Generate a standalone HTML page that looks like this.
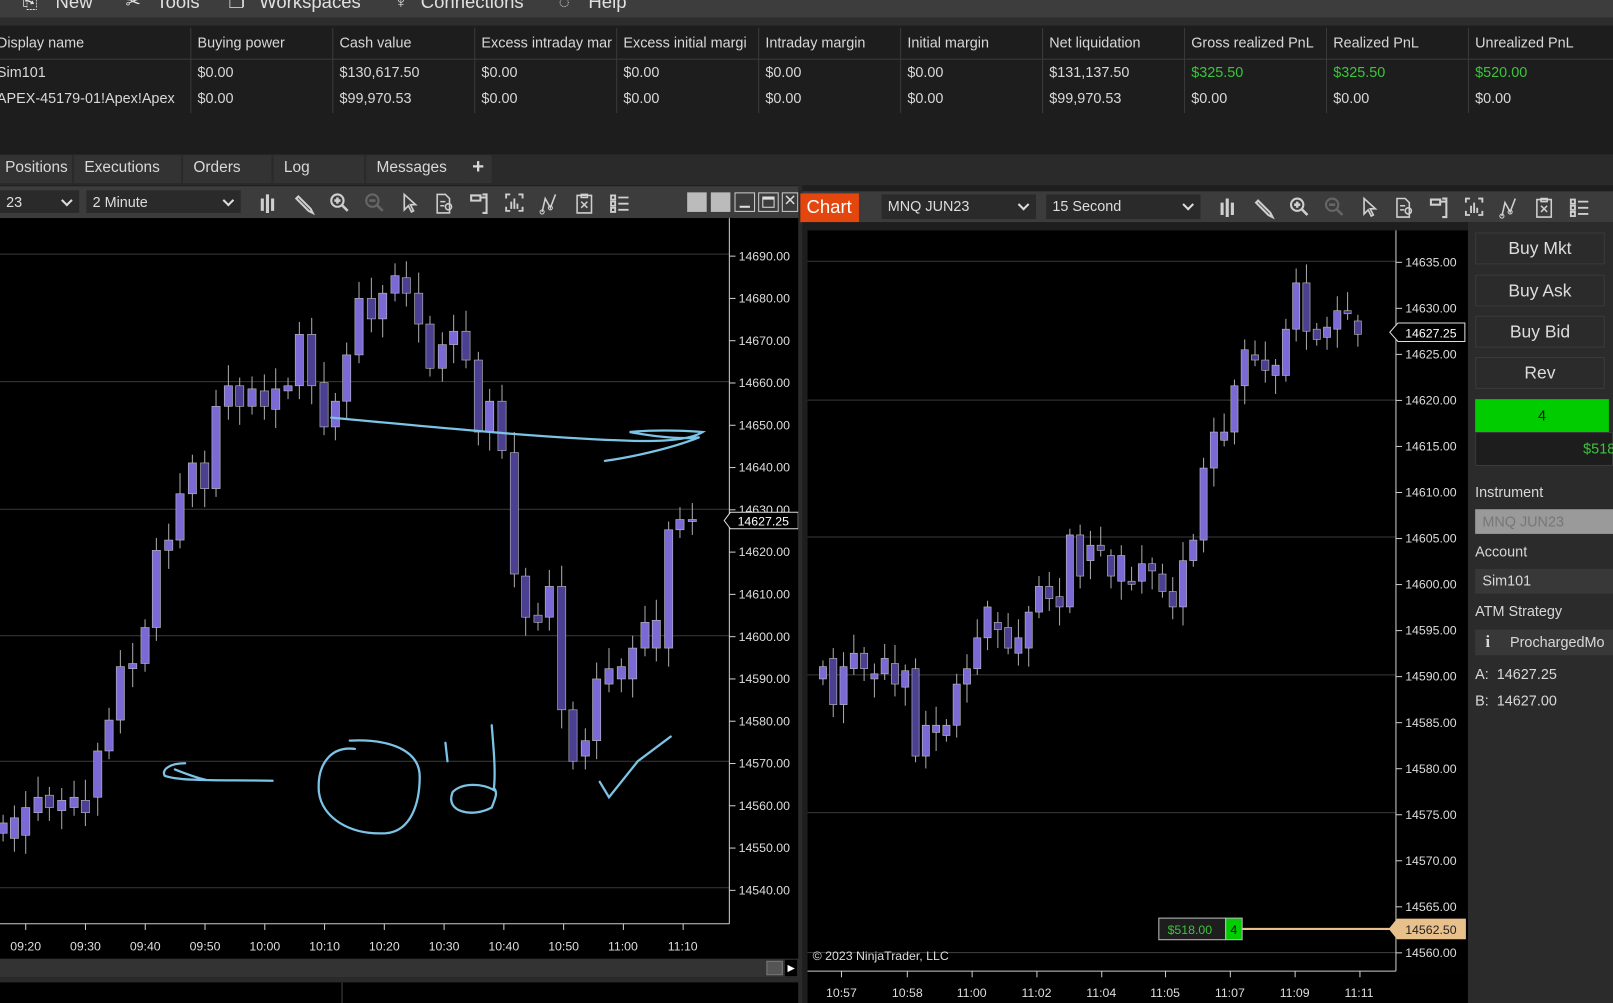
<!DOCTYPE html>
<html><head><meta charset="utf-8">
<style>
*{margin:0;padding:0;box-sizing:border-box}
html,body{width:1613px;height:1003px;overflow:hidden;background:#1e1e1e;font-family:"Liberation Sans",sans-serif;color:#d8d8d8}
#w{position:absolute;left:0;top:0;width:1568px;height:975px;transform:scale(1.02870);transform-origin:0 0;background:#1e1e1e}
.a{position:absolute}
.t{position:absolute;white-space:nowrap;font-size:14px}
.m{position:absolute;top:-8px;font-size:18px;color:#e0e0e0;white-space:nowrap}
.tb{background:#3c3c3c}
.dd{position:absolute;background:#2a2a2a;height:22px;font-size:14px;padding:3px 6px;color:#ddd}
.dd:after{content:"";position:absolute;right:8px;top:6px;width:6px;height:6px;border-right:2px solid #ddd;border-bottom:2px solid #ddd;transform:rotate(45deg)}
.btn{position:absolute;left:1434px;width:126px;height:31px;background:#2b2b2b;border:1px solid #3a3a3a;font-size:17px;text-align:center;line-height:29px;color:#ddd}
</style></head><body><div id="w">
<div class="a" style="left:0;top:0;width:1568px;height:17px;background:#3d3d3d"></div>
<div class="a" style="left:0;top:17px;width:1568px;height:8px;background:#2d2d2d"></div>
<div class="m" style="left:22px">⎘</div><div class="m" style="left:54px">New</div>
<div class="m" style="left:122px">✂</div><div class="m" style="left:152px">Tools</div>
<div class="m" style="left:222px">❐</div><div class="m" style="left:252px">Workspaces</div>
<div class="m" style="left:383px">♆</div><div class="m" style="left:409px">Connections</div>
<div class="m" style="left:543px">◌</div><div class="m" style="left:572px">Help</div>
<div class="a" style="left:0;top:25px;width:1568px;height:125px;background:#1d1d1d"></div>
<div class="a" style="left:0;top:57px;width:1568px;height:1px;background:#3c3c3c"></div>
<div id="grid"></div>
<div class="a" style="left:0;top:150px;width:1568px;height:30px;background:#2a2a2a"></div>
<div id="tabs"></div>
<div class="a tb" style="left:0;top:181px;width:778px;height:31px"></div>
<div class="dd" style="left:0;top:185px;width:77px">23</div>
<div class="dd" style="left:84px;top:185px;width:150px">2 Minute</div>
<div class="a" style="left:668px;top:187px;width:19px;height:19px;background:#bbb"></div>
<div class="a" style="left:691px;top:187px;width:19px;height:19px;background:#bbb"></div>
<div class="a" style="left:714px;top:187px;width:20px;height:19px;border:1px solid #ccc"><div class="a" style="left:4px;top:12px;width:10px;height:2px;background:#ddd"></div></div>
<div class="a" style="left:737px;top:187px;width:20px;height:19px;border:1px solid #ccc"><div class="a" style="left:3px;top:3px;width:12px;height:11px;border:1px solid #ddd;border-top-width:3px"></div></div>
<div class="a" style="left:760px;top:187px;width:16px;height:19px;border:1px solid #ccc;color:#ddd;font-size:15px;line-height:16px;text-align:center">✕</div>
<div class="a" style="left:0;top:212px;width:776px;height:720px;background:#000"></div>
<svg id="lc" class="a" style="left:0;top:0" width="776" height="975"></svg>
<div class="a" style="left:0;top:932px;width:776px;height:18px;background:#333"></div>
<div class="a" style="left:745px;top:934px;width:16px;height:14px;background:#555;border:1px solid #777"></div>
<div class="a" style="left:763px;top:933px;width:12px;height:16px;background:#000;color:#fff;font-size:9px;text-align:center;line-height:16px">▶</div>
<div class="a" style="left:0;top:950px;width:776px;height:5px;background:#2a2a2a"></div>
<div class="a" style="left:0;top:955px;width:776px;height:20px;background:#000"></div>
<div class="a" style="left:332px;top:955px;width:1px;height:20px;background:#444"></div>
<div class="a" style="left:776px;top:180px;width:4px;height:795px;background:#2a2a2a"></div>
<div class="a tb" style="left:780px;top:186px;width:788px;height:30px"></div>
<div class="a" style="left:778px;top:188px;width:57px;height:28px;background:#e3470d;color:#fff;font-size:18px;padding:3px 6px">Chart</div>
<div class="dd" style="left:857px;top:189px;width:150px;height:24px">MNQ JUN23</div>
<div class="dd" style="left:1017px;top:189px;width:150px;height:24px">15 Second</div>
<div class="a" style="left:780px;top:216px;width:650px;height:759px;background:#1e1e1e"></div>
<div class="a" style="left:785px;top:224px;width:642px;height:720px;background:#000"></div>
<div class="a" style="left:785px;top:944px;width:642px;height:31px;background:#000"></div>
<svg id="rc" class="a" style="left:0;top:0" width="1568" height="975"></svg>
<div class="a" style="left:1427px;top:216px;width:141px;height:759px;background:#2b2b2b"></div>
<div class="btn" style="top:226px">Buy Mkt</div>
<div class="btn" style="top:267px">Buy Ask</div>
<div class="btn" style="top:307px">Buy Bid</div>
<div class="btn" style="top:347px">Rev</div>
<div class="a" style="left:1434px;top:388px;width:130px;height:32px;background:#00cc00;color:#111;text-align:center;line-height:32px;font-size:14px">4</div>
<div class="a" style="left:1434px;top:420px;width:134px;height:33px;background:#1d1d1d;border:1px solid #3a3a3a"></div>
<div class="t" style="left:1539px;top:428px;color:#3bc43b">$518</div>
<div class="t" style="left:1434px;top:470px">Instrument</div>
<div class="a" style="left:1434px;top:495px;width:134px;height:24px;background:#9a9a9a;color:#777;font-size:14px;padding:4px 7px">MNQ JUN23</div>
<div class="t" style="left:1434px;top:528px">Account</div>
<div class="a" style="left:1434px;top:553px;width:134px;height:24px;background:#383838;font-size:14px;padding:3px 7px">Sim101</div>
<div class="t" style="left:1434px;top:586px">ATM Strategy</div>
<div class="a" style="left:1434px;top:612px;width:134px;height:25px;background:#383838;font-size:14px;padding:4px 10px"><b style="font-family:'Liberation Serif';font-size:16px">i</b>&nbsp;&nbsp;&nbsp;&nbsp;&nbsp;ProchargedMo</div>
<div class="t" style="left:1434px;top:647px">A:&nbsp; 14627.25</div>
<div class="t" style="left:1434px;top:673px">B:&nbsp; 14627.00</div>
</div>
<script>
var H='';
var cols=[0,185,323,461,599,737,875,1013,1151,1289,1427,1565];
var hd=['Display name','Buying power','Cash value','Excess intraday mar','Excess initial margi','Intraday margin','Initial margin','Net liquidation','Gross realized PnL','Realized PnL','Unrealized PnL'];
var r1=['Sim101','$0.00','$130,617.50','$0.00','$0.00','$0.00','$0.00','$131,137.50','$325.50','$325.50','$520.00'];
var r2=['APEX-45179-01!Apex!Apex','$0.00','$99,970.53','$0.00','$0.00','$0.00','$0.00','$99,970.53','$0.00','$0.00','$0.00'];
for(var i=0;i<11;i++){var x=cols[i]+(i?7:-3);
H+='<div class="t" style="left:'+x+'px;top:33px;width:'+(cols[i+1]-cols[i]-8)+'px;overflow:hidden">'+hd[i]+'</div>';
var g=i>=8?'color:#3bc43b':'';
H+='<div class="t" style="left:'+x+'px;top:62px;'+g+'">'+r1[i]+'</div>';
H+='<div class="t" style="left:'+x+'px;top:87px">'+r2[i]+'</div>';
if(i)H+='<div class="a" style="left:'+cols[i]+'px;top:27px;width:1px;height:83px;background:#3a3a3a"></div>';}
document.getElementById('grid').innerHTML=H;
var tb=[['Positions',-5,70],['Executions',72,176],['Orders',178,264],['Log',266,354],['Messages',356,452],['+',452,478]];
H='';tb.forEach(function(t){H+='<div class="a" style="left:'+t[1]+'px;top:151px;width:'+(t[2]-t[1])+'px;height:27px;background:#333;font-size:15px;padding:3px 10px;'+(t[0]=='+'?'font-size:20px;padding:0 7px;font-weight:bold':'')+'">'+t[0]+'</div>'});
document.getElementById('tabs').innerHTML=H;
function icons(x0,y,step){var s='',c='#cfcfcf';
var p=[
'<path d="M3 6v12M8 2v18M13 6v12" stroke="'+c+'" stroke-width="3"/>',
'<path d="M4 4l12 12l2 4l-4-2L2 6z" fill="none" stroke="'+c+'" stroke-width="2"/>',
'<circle cx="8" cy="8" r="6" fill="none" stroke="'+c+'" stroke-width="2"/><path d="M5 8h6M8 5v6M12 12l6 6" stroke="'+c+'" stroke-width="2.5"/>',
'<circle cx="8" cy="8" r="6" fill="none" stroke="#666" stroke-width="2"/><path d="M5 8h6M12 12l6 6" stroke="#666" stroke-width="2.5"/>',
'<path d="M5 2v15l4-4l3 6l2-1l-3-6h5z" fill="none" stroke="'+c+'" stroke-width="1.6"/>',
'<path d="M3 2h8l4 4v14H3z M6 9h5M6 13h4" fill="none" stroke="'+c+'" stroke-width="1.5"/><circle cx="14" cy="14" r="3" fill="none" stroke="'+c+'" stroke-width="1.5"/>',
'<path d="M2 3h9v5H2zM11 5h5M13 2h4v18h-4" fill="none" stroke="'+c+'" stroke-width="2"/>',
'<path d="M2 6V2h4M14 2h4v4M2 14v4h4M18 14v4h-4M7 16V9M10 16V6M13 16v-5" fill="none" stroke="'+c+'" stroke-width="1.8"/>',
'<path d="M3 19L6 6l5 9l5-13" fill="none" stroke="'+c+'" stroke-width="1.5"/><circle cx="3" cy="19" r="2" fill="none" stroke="'+c+'"/><circle cx="11" cy="15" r="2" fill="none" stroke="'+c+'"/>',
'<path d="M3 3h14v17H3zM7 2h6v3H7zM7 9l6 6M13 9l-6 6" fill="none" stroke="'+c+'" stroke-width="1.5"/>',
'<path d="M2 3h4v4H2zM2 9h4v4H2zM2 15h4v4H2zM9 5h10M9 11h10M9 17h10" fill="none" stroke="'+c+'" stroke-width="1.8"/>'];
p.forEach(function(q,i){s+='<g transform="translate('+(x0+i*step)+','+y+')">'+q+'</g>'});return s;}
var L='';
function ly(p){return 249+(14690-p)*4.11}
for(var p=14690;p>=14540;p-=10){var y=ly(p);L+='<line x1="709" x2="715" y1="'+y+'" y2="'+y+'" stroke="#ccc"/><text x="718" y="'+(y+4)+'" fill="#ddd" font-size="12" font-family="Liberation Sans">'+p+'.00</text>';}
[247,371,495,618,740,863].forEach(function(y){L+='<line x1="0" x2="709" y1="'+y+'" y2="'+y+'" stroke="#3a3a3a"/>'});
L+='<line x1="709" x2="709" y1="212" y2="898" stroke="#ccc"/><line x1="0" x2="709" y1="898" y2="898" stroke="#ccc"/>';
var tl=['09:20','09:30','09:40','09:50','10:00','10:10','10:20','10:30','10:40','10:50','11:00','11:10'];
tl.forEach(function(t,i){var x=25+i*58.1;L+='<line x1="'+x+'" x2="'+x+'" y1="898" y2="904" stroke="#ccc"/><text x="'+(x-15)+'" y="924" fill="#ddd" font-size="12" font-family="Liberation Sans">'+t+'</text>'});
var lc=[[3,810,800],[14,815,795],[25,812,785],[37,790,775],[48,773,785],[60,788,778],[72,785,775],[83,778,790],[95,775,730],[106,730,700],[117,700,648],[129,650,645],[141,645,610],[152,610,535],[164,535,525],[175,525,480],[187,480,450],[199,450,475],[210,475,395],[222,395,375],[233,375,395],[245,395,378],[257,380,395],[268,398,378],[280,380,375],[291,375,325],[303,325,375],[315,372,415],[326,415,390],[337,390,345],[349,345,290],[361,290,310],[372,310,285],[384,285,268],[395,270,285],[407,285,315],[418,315,358],[430,358,335],[441,335,322],[453,322,350],[465,350,420],[476,420,390],[488,390,438],[500,440,558],[511,560,600],[523,598,605],[534,600,570],[546,570,690],[557,690,740],[569,735,720],[580,720,660],[592,665,650],[604,660,648],[615,660,630],[627,630,605],[638,630,603],[650,630,515],[661,515,505],[673,507,505]];
lc.forEach(function(c,i){var up=c[2]<c[1],t=Math.min(c[1],c[2]),b=Math.max(c[1],c[2]);if(b-t<2)b=t+2;
L+='<line x1="'+c[0]+'" x2="'+c[0]+'" y1="'+(t-8-(i%4)*4)+'" y2="'+(b+8+(i%3)*5)+'" stroke="#aaa"/><rect x="'+(c[0]-4)+'" y="'+t+'" width="8" height="'+(b-t)+'" fill="'+(up?'#7b6ad6':'#4a3f90')+'" stroke="#bbb" stroke-width="0.6"/>'});
L+='<path d="M704 506l6-8h66v16h-66z" fill="#000" stroke="#ddd"/><text x="717" y="511" fill="#fff" font-size="12" font-family="Liberation Sans">14627.25</text>';
var bl='fill="none" stroke="#7cc4e6" stroke-width="2.2" stroke-linecap="round"';
L+='<path d="M322 406C420 415 520 425 600 428C640 430 670 428 683 420C660 418 630 418 612 420C640 425 665 427 680 425C650 437 610 445 588 448" '+bl+'/>';
L+='<path d="M180 742C165 742 157 748 160 754C175 760 220 758 265 759M170 748C180 752 190 756 200 758" '+bl+'/>';
L+='<path d="M345 728C320 725 308 745 310 770C313 795 340 812 375 810C400 808 408 780 408 755C408 730 380 718 340 720" '+bl+'/>';
L+='<path d="M433 722L435 740M478 705C480 730 482 750 480 768C470 762 450 760 440 770C432 790 460 795 478 785C482 775 484 770 480 766" '+bl+'/>';
L+='<path d="M583 760L592 775L620 740L652 716" '+bl+'/>';
L+=icons(252,187,34);
document.getElementById('lc').innerHTML=L;
var R='';
function ry(p){return 255+(14635-p)*8.95}
[254,389,522,656,790].forEach(function(y){R+='<line x1="785" x2="1357" y1="'+y+'" y2="'+y+'" stroke="#3a3a3a"/>'});
R+='<line x1="785" x2="1357" y1="926" y2="926" stroke="#3a3a3a"/>';
for(var p=14635;p>=14560;p-=5){var y=ry(p);R+='<line x1="1357" x2="1363" y1="'+y+'" y2="'+y+'" stroke="#ccc"/><text x="1366" y="'+(y+4)+'" fill="#ddd" font-size="12" font-family="Liberation Sans">'+p+'.00</text>';}
R+='<line x1="1357" x2="1357" y1="224" y2="944" stroke="#ccc"/><line x1="785" x2="1357" y1="944" y2="944" stroke="#ccc"/>';
[['10:57',818],['10:58',882],['11:00',945],['11:02',1008],['11:04',1071],['11:05',1133],['11:07',1196],['11:09',1259],['11:11',1322]].forEach(function(t){R+='<line x1="'+t[1]+'" x2="'+t[1]+'" y1="944" y2="950" stroke="#ccc"/><text x="'+(t[1]-15)+'" y="969" fill="#ddd" font-size="12" font-family="Liberation Sans">'+t[0]+'</text>'});
var rc=[[800,660,648],[810,640,685],[820,685,648],[830,650,635],[840,635,650],[850,660,655],[860,655,640],[870,645,665],[880,668,652],[890,650,735],[900,735,705],[910,712,705],[920,715,705],[930,705,665],[940,665,650],[950,650,620],[960,620,590],[970,605,612],[980,610,630],[990,635,620],[1000,630,595],[1010,595,570],[1020,570,582],[1030,580,590],[1040,590,520],[1050,520,560],[1060,545,530],[1070,530,535],[1080,540,560],[1090,565,540],[1100,565,568],[1110,565,548],[1120,548,555],[1130,558,575],[1140,575,590],[1150,590,545],[1160,545,525],[1170,525,455],[1180,455,420],[1190,428,420],[1200,420,375],[1210,375,340],[1220,345,350],[1230,350,360],[1240,365,355],[1250,365,320],[1260,320,275],[1270,275,322],[1280,320,330],[1290,328,318],[1300,320,302],[1310,302,305],[1320,312,325]];
rc.forEach(function(c,i){var up=c[2]<c[1],t=Math.min(c[1],c[2]),b=Math.max(c[1],c[2]);if(b-t<2)b=t+2;
R+='<line x1="'+c[0]+'" x2="'+c[0]+'" y1="'+(t-6-(i%4)*4)+'" y2="'+(b+6+(i%3)*6)+'" stroke="#aaa"/><rect x="'+(c[0]-3.5)+'" y="'+t+'" width="7" height="'+(b-t)+'" fill="'+(up?'#7b6ad6':'#4a3f90')+'" stroke="#bbb" stroke-width="0.6"/>'});
R+='<path d="M1351 323l8-9h65v18h-65z" fill="#000" stroke="#ddd"/><text x="1366" y="328" fill="#fff" font-size="12" font-family="Liberation Sans">14627.25</text>';
R+='<line x1="1207" x2="1355" y1="903" y2="903" stroke="#e8c08c" stroke-width="2"/><path d="M1350 903l8-10h67v20h-67z" fill="#e8c08c"/><text x="1366" y="908" fill="#222" font-size="12" font-family="Liberation Sans">14562.50</text>';
R+='<rect x="1126.5" y="892.5" width="65" height="21" fill="#1e1e1e" stroke="#bbb"/><text x="1135" y="908" fill="#3bc43b" font-size="12" font-family="Liberation Sans">$518.00</text><rect x="1191.5" y="892.5" width="16" height="21" fill="#00cc00" stroke="#bbb"/><text x="1196" y="908" fill="#111" font-size="12" font-family="Liberation Sans">4</text>';
R+='<text x="790" y="933" fill="#ddd" font-size="12" font-family="Liberation Sans">© 2023 NinjaTrader, LLC</text>';
R+=icons(1185,191,34);
document.getElementById('rc').innerHTML=R;
</script>
</body></html>
